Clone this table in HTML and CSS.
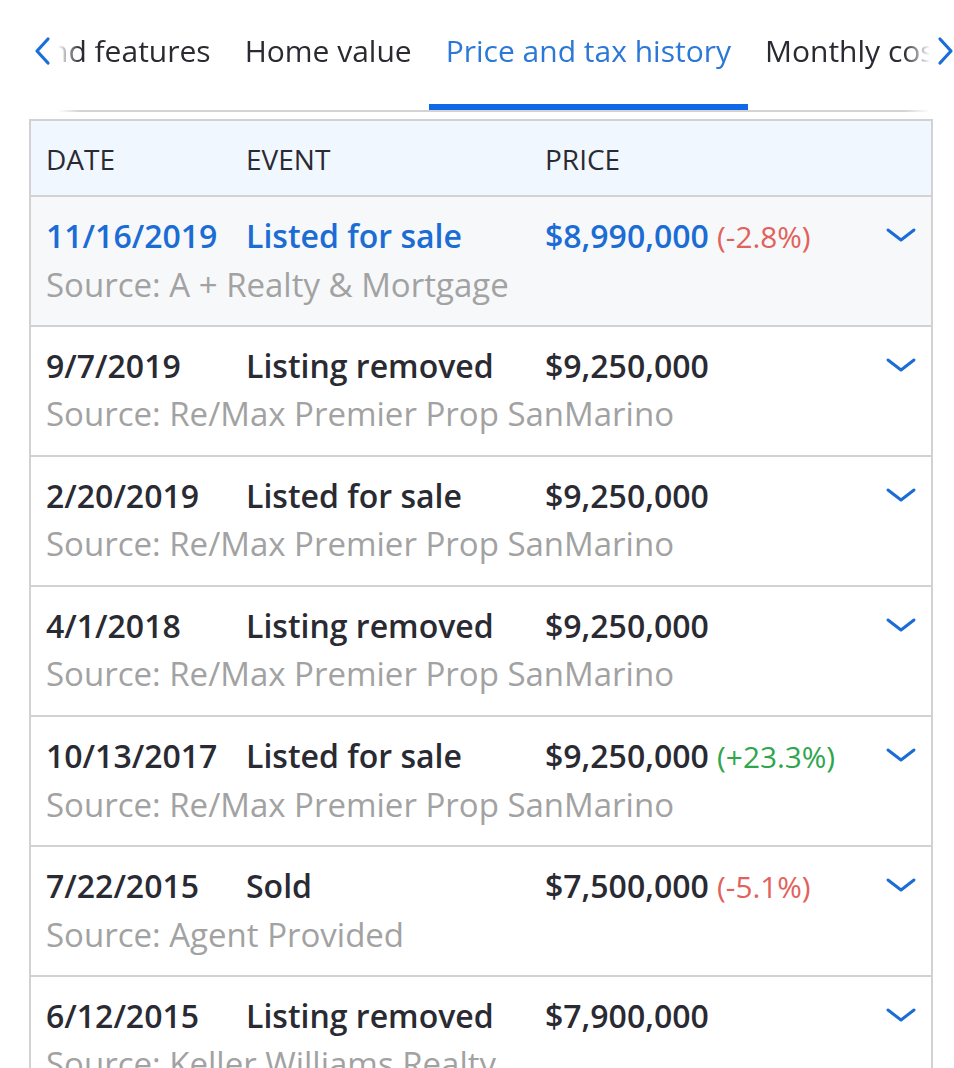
FILE: index.html
```html
<!DOCTYPE html>
<html>
<head>
<meta charset="utf-8">
<link rel="stylesheet" href="styles.css">
</head>
<body>
<div class="page">
  <nav class="tabs">
    <button class="tab-arrow" aria-label="Previous">
      <svg width="18" height="30" viewBox="0 0 18 30"><path d="M15 3 L4 15 L15 27" fill="none" stroke="#1a6ed8" stroke-width="3.2" stroke-linecap="round" stroke-linejoin="round"/></svg>
    </button>
    <div class="tab-scroller">
      <div class="tab-strip">
        <span class="tab">Facts and features</span>
        <span class="tab">Home value</span>
        <span class="tab active">Price and tax history</span>
        <span class="tab">Monthly cost</span>
      </div>
    </div>
    <button class="tab-arrow" aria-label="Next">
      <svg width="18" height="30" viewBox="0 0 18 30"><path d="M3 3 L14 15 L3 27" fill="none" stroke="#1a6ed8" stroke-width="3.2" stroke-linecap="round" stroke-linejoin="round"/></svg>
    </button>
  </nav>

  <div class="history">
    <div class="head">
      <span>DATE</span><span>EVENT</span><span>PRICE</span><span></span>
    </div>

    <div class="row selected">
      <span class="date">11/16/2019</span>
      <span class="event">Listed for sale</span>
      <span class="price">$8,990,000 <em class="neg">(-2.8%)</em></span>
      <svg class="chev" viewBox="0 0 32 16"><path d="M3 3 L16 13 L29 3"/></svg>
      <span class="source">Source: A + Realty &amp; Mortgage</span>
    </div>

    <div class="row">
      <span class="date">9/7/2019</span>
      <span class="event">Listing removed</span>
      <span class="price">$9,250,000</span>
      <svg class="chev" viewBox="0 0 32 16"><path d="M3 3 L16 13 L29 3"/></svg>
      <span class="source">Source: Re/Max Premier Prop SanMarino</span>
    </div>

    <div class="row">
      <span class="date">2/20/2019</span>
      <span class="event">Listed for sale</span>
      <span class="price">$9,250,000</span>
      <svg class="chev" viewBox="0 0 32 16"><path d="M3 3 L16 13 L29 3"/></svg>
      <span class="source">Source: Re/Max Premier Prop SanMarino</span>
    </div>

    <div class="row">
      <span class="date">4/1/2018</span>
      <span class="event">Listing removed</span>
      <span class="price">$9,250,000</span>
      <svg class="chev" viewBox="0 0 32 16"><path d="M3 3 L16 13 L29 3"/></svg>
      <span class="source">Source: Re/Max Premier Prop SanMarino</span>
    </div>

    <div class="row">
      <span class="date">10/13/2017</span>
      <span class="event">Listed for sale</span>
      <span class="price">$9,250,000 <em class="pos">(+23.3%)</em></span>
      <svg class="chev" viewBox="0 0 32 16"><path d="M3 3 L16 13 L29 3"/></svg>
      <span class="source">Source: Re/Max Premier Prop SanMarino</span>
    </div>

    <div class="row">
      <span class="date">7/22/2015</span>
      <span class="event">Sold</span>
      <span class="price">$7,500,000 <em class="neg">(-5.1%)</em></span>
      <svg class="chev" viewBox="0 0 32 16"><path d="M3 3 L16 13 L29 3"/></svg>
      <span class="source">Source: Agent Provided</span>
    </div>

    <div class="row">
      <span class="date">6/12/2015</span>
      <span class="event">Listing removed</span>
      <span class="price">$7,900,000</span>
      <svg class="chev" viewBox="0 0 32 16"><path d="M3 3 L16 13 L29 3"/></svg>
      <span class="source">Source: Keller Williams Realty</span>
    </div>
  </div>
</div>
</body>
</html>
```

FILE: styles.css
```css
html, body {
  margin: 0;
  padding: 0;
  background: #ffffff;
  overflow: hidden;
}

body {
  font-family: "Open Sans", "Noto Sans", sans-serif;
  color: #2a2a33;
  width: 954px;
  height: 1068px;
}

.page {
  padding-left: 29px;
  width: 904px;
}

/* ---------- tabs ---------- */
.tabs {
  display: flex;
  align-items: flex-start;
  height: 119px;
  width: 936px;
}

.tab-arrow {
  flex: 0 0 29px;
  height: 104px;
  border: 0;
  padding: 0;
  margin: 0;
  background: transparent;
  display: flex;
  align-items: flex-start;
  padding-top: 36px;
}

.tab-arrow:first-child {
  justify-content: flex-start;
  padding-left: 4px;
}

.tab-arrow:last-child {
  justify-content: flex-start;
  padding-left: 7px;
}

.tab-scroller {
  flex: 0 0 872px;
  overflow: hidden;
  border-bottom: 2px solid #d3d3d3;
  -webkit-mask-image: linear-gradient(to right, transparent 0, #000 22px, #000 calc(100% - 26px), transparent 100%);
  mask-image: linear-gradient(to right, transparent 0, #000 22px, #000 calc(100% - 26px), transparent 100%);
}

.tab-strip {
  display: flex;
  white-space: nowrap;
  margin-left: -121px;
}

.tab {
  flex: 0 0 auto;
  font-size: 30px;
  line-height: 40px;
  padding: 31px 17px 33px;
  border-bottom: 6px solid transparent;
  color: #2a2a33;
}

.tab.active {
  color: #2b78d6;
  border-bottom-color: #1168e6;
}

/* ---------- table ---------- */
.history {
  border: 2px solid #d2d2d2;
  border-bottom: 0;
}

.head,
.row {
  display: grid;
  grid-template-columns: 200px 299px 1fr 32px;
  padding: 0 14px 0 15px;
}

.head {
  background: #f1f7fe;
  align-items: center;
  font-size: 28px;
  border-bottom: 2px solid #d2d2d2;
  padding-top: 1px;
  box-sizing: border-box;
  height: 76px;
}

.row {
  border-bottom: 2px solid #d2d2d2;
  padding-top: 15px;
  box-sizing: content-box;
  height: 113px;
  align-content: start;
  font-size: 32px;
  line-height: 48px;
}

.row.selected {
  background: #f7f8fa;
}

.date,
.event,
.price {
  font-weight: 600;
  white-space: nowrap;
}

.selected .date,
.selected .event,
.selected .price {
  color: #1b6cd4;
}

.price em {
  font-style: normal;
  font-weight: 400;
  font-size: 0.93em;
}

.neg { color: #e2625b; }
.pos { color: #2ea64c; }

.chev {
  width: 32px;
  height: 16px;
  margin-top: 15px;
  fill: none;
  stroke: #1b6cd4;
  stroke-width: 3;
  stroke-linecap: round;
  stroke-linejoin: round;
}

.source {
  grid-column: 1 / 4;
  color: #a2a2a2;
  font-size: 33px;
  line-height: 47px;
  white-space: nowrap;
}
```
